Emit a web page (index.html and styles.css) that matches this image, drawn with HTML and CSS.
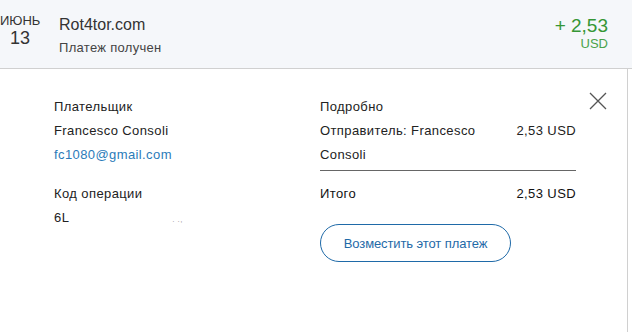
FILE: index.html
```html
<!DOCTYPE html>
<html lang="ru">
<head>
    <meta charset="UTF-8">
    <title>Rot4tor.com</title>
    <link rel="stylesheet" href="styles.css">
</head>
<body>

    <div class="tx-header">
        <div class="tx-date">
            <div class="tx-month">ИЮНЬ</div>
            <div class="tx-day">13</div>
        </div>
        <div class="tx-info">
            <div class="tx-name">Rot4tor.com</div>
            <div class="tx-status">Платеж получен</div>
        </div>
        <div class="tx-amount">
            <div class="tx-sum">+ 2,53</div>
            <div class="tx-currency">USD</div>
        </div>
    </div>

    <div class="tx-details">
        <div class="details-col">
            <div class="label">Плательщик</div>
            <div>Francesco Consoli</div>
            <div class="email">fc1080@gmail.com</div>

            <div class="label section">Код операции</div>
            <div class="code">6L<span class="code-dots">. .,</span></div>
        </div>

        <div class="details-col details-right">
            <div class="label">Подробно</div>
            <div class="row">
                <div class="row-name">Отправитель: Francesco Consoli</div>
                <div class="row-sum">2,53 USD</div>
            </div>
            <div class="row total">
                <div class="row-name">Итого</div>
                <div class="row-sum">2,53 USD</div>
            </div>
            <button class="refund-button">Возместить этот платеж</button>
        </div>

        <div class="close">
            <svg width="18" height="18" viewBox="0 0 18 18">
                <path d="M1 1 L17 17 M17 1 L1 17" stroke="#555" stroke-width="1.3" fill="none"/>
            </svg>
        </div>
    </div>

</body>
</html>
```

FILE: styles.css
```css
body {
    margin: 0;
    font-family: 'Liberation Sans', Arial, sans-serif;
    color: #222;
    background: #fff;
}

.tx-header {
    display: flex;
    align-items: flex-start;
    height: 69px;
    background-color: #f5f7fa;
    border-bottom: 1px solid #d0d0d0;
    box-sizing: border-box;
}

.tx-date {
    width: 40px;
    padding-top: 13px;
    text-align: center;
    color: #333;
}

.tx-month {
    font-size: 13px;
    line-height: 15px;
}

.tx-day {
    font-size: 18px;
    line-height: 20px;
}

.tx-info {
    flex: 1;
    padding-top: 15px;
    padding-left: 19px;
}

.tx-name {
    font-size: 16px;
    line-height: 20px;
    color: #333;
}

.tx-status {
    font-size: 13px;
    line-height: 20px;
    margin-top: 3px;
    color: #444;
    letter-spacing: 0.3px;
}

.tx-amount {
    padding-top: 16px;
    padding-right: 24px;
    text-align: right;
}

.tx-sum {
    font-size: 19px;
    line-height: 20px;
    color: #359635;
}

.tx-currency {
    font-size: 13px;
    line-height: 16px;
    color: #4aa34a;
}

.tx-details {
    display: flex;
    width: 628px;
    height: 263px;
    box-sizing: border-box;
    border-right: 1px solid #d0d0d0;
    padding: 26px 0 0 54px;
    font-size: 13px;
    line-height: 24px;
    letter-spacing: 0.4px;
}

.details-col {
    width: 266px;
}

.details-right {
    width: 256px;
}

.email {
    color: #2b7bb9;
}

.section {
    margin-top: 15px;
}

.code-dots {
    margin-left: 103px;
    font-size: 8px;
    color: #999;
}

.row {
    display: flex;
    justify-content: space-between;
    padding-bottom: 3px;
    border-bottom: 1px solid #666;
}

.row-name {
    width: 170px;
}

.total {
    border-bottom: none;
    padding-top: 11px;
    color: #111;
}

.refund-button {
    margin-top: 15px;
    width: 191px;
    height: 38px;
    background: transparent;
    border: 1px solid #1f6aa8;
    border-radius: 19px;
    color: #1f6aa8;
    font-family: 'Liberation Sans', Arial, sans-serif;
    font-size: 13px;
    letter-spacing: -0.1px;
    cursor: pointer;
}

.close {
    margin-left: 13px;
    margin-top: -3px;
}
```
